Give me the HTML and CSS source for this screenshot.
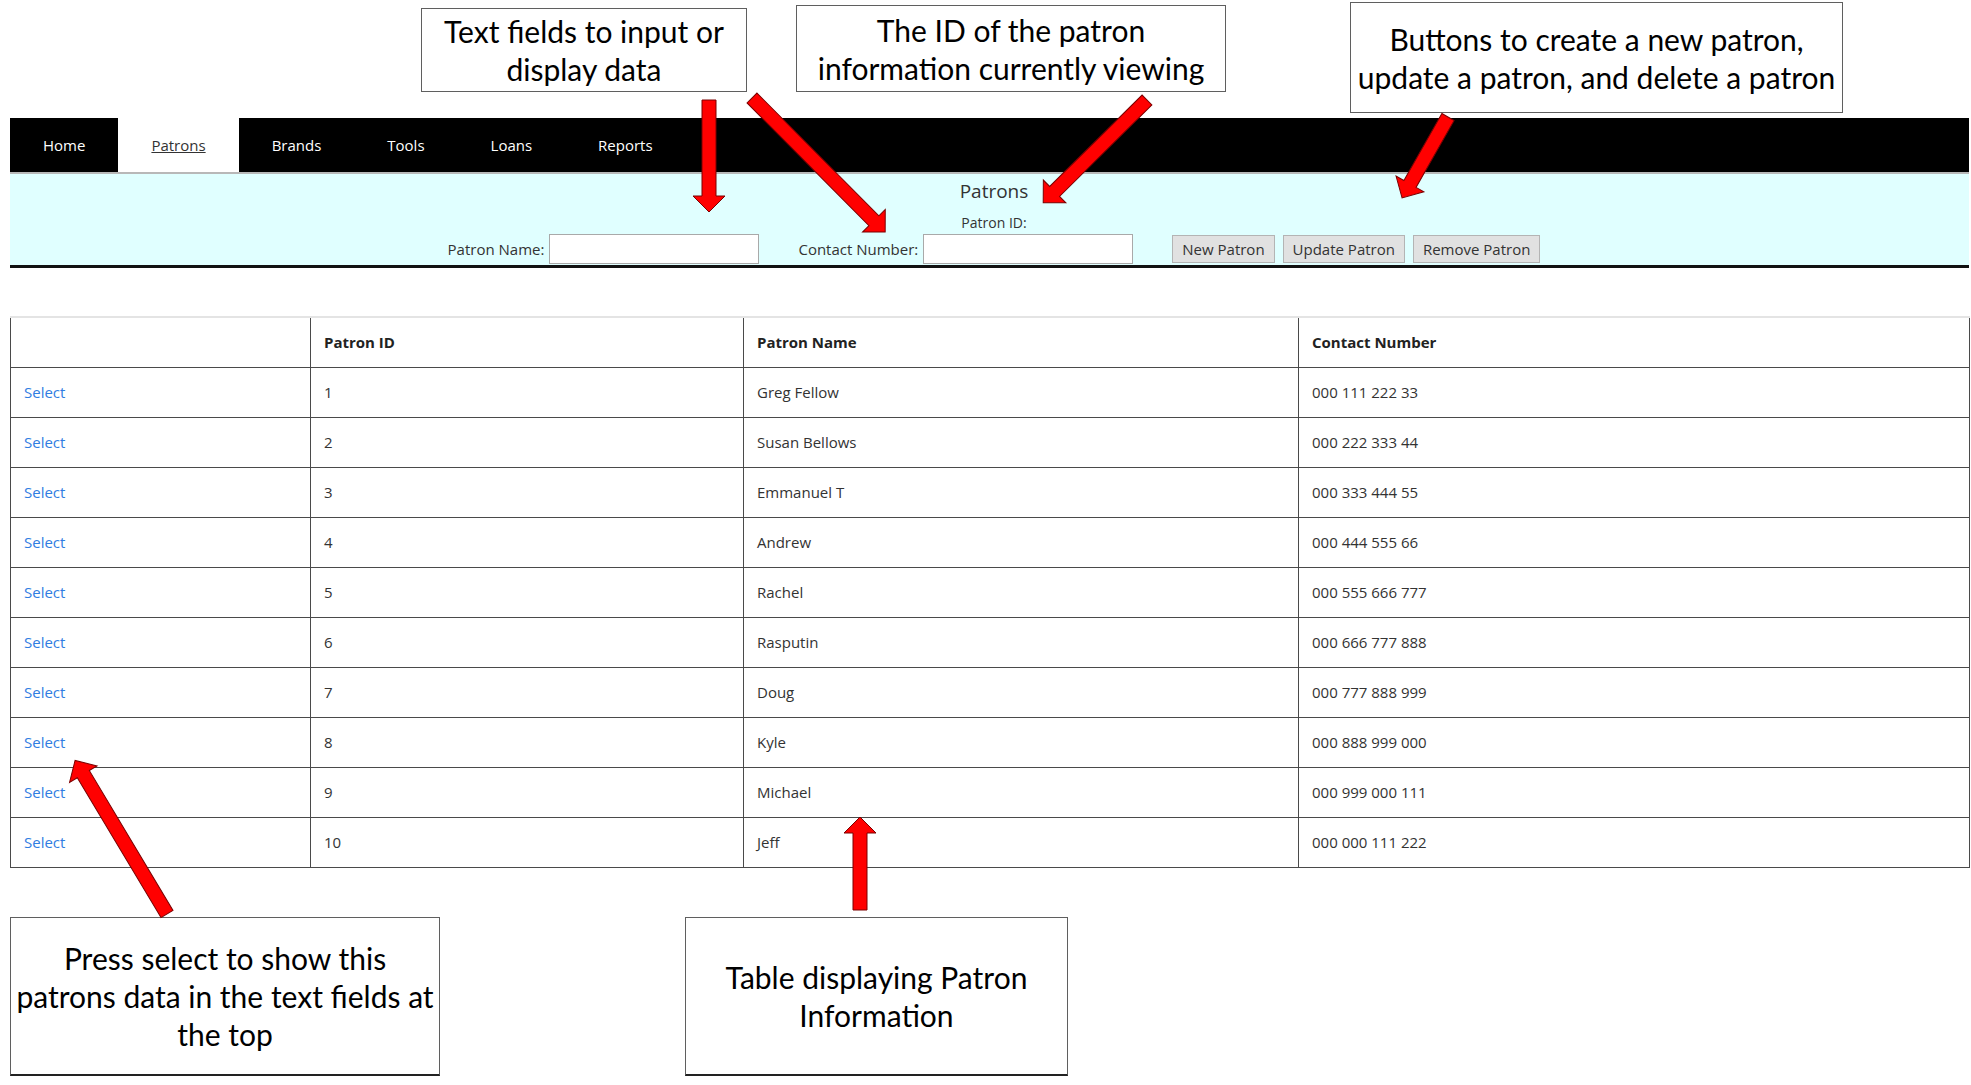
FILE: index.html
```html
<!DOCTYPE html>
<html lang="en">
<head>
<meta charset="utf-8">
<title>Patrons</title>
<link rel="stylesheet" href="styles.css">
</head>
<body>
<div class="page">
  <div class="notes-top">
    <div class="callout c1">Text fields to input or<br>display data</div>
    <div class="callout c2">The ID of the patron<br>information currently viewing</div>
    <div class="callout c3">Buttons to create a new patron,<br>update a patron, and delete a patron</div>
  </div>

  <nav class="nav">
    <a class="nav-item">Home</a>
    <a class="nav-item active">Patrons</a>
    <a class="nav-item">Brands</a>
    <a class="nav-item">Tools</a>
    <a class="nav-item">Loans</a>
    <a class="nav-item">Reports</a>
  </nav>

  <section class="panel">
    <div class="panel-title">Patrons</div>
    <div class="panel-id">Patron ID:</div>
    <div class="form-row">
      <label class="lbl">Patron Name:</label>
      <input class="field" type="text">
      <label class="lbl lbl-gap">Contact Number:</label>
      <input class="field" type="text">
      <div class="buttons">
        <button class="btn">New Patron</button>
        <button class="btn">Update Patron</button>
        <button class="btn">Remove Patron</button>
      </div>
    </div>
  </section>

  <table class="grid">
    <colgroup>
      <col class="col1"><col class="col2"><col class="col3"><col class="col4">
    </colgroup>
    <thead>
      <tr><th></th><th>Patron ID</th><th>Patron Name</th><th>Contact Number</th></tr>
    </thead>
    <tbody>
      <tr><td><a class="sel">Select</a></td><td>1</td><td>Greg Fellow</td><td>000 111 222 33</td></tr>
      <tr><td><a class="sel">Select</a></td><td>2</td><td>Susan Bellows</td><td>000 222 333 44</td></tr>
      <tr><td><a class="sel">Select</a></td><td>3</td><td>Emmanuel T</td><td>000 333 444 55</td></tr>
      <tr><td><a class="sel">Select</a></td><td>4</td><td>Andrew</td><td>000 444 555 66</td></tr>
      <tr><td><a class="sel">Select</a></td><td>5</td><td>Rachel</td><td>000 555 666 777</td></tr>
      <tr><td><a class="sel">Select</a></td><td>6</td><td>Rasputin</td><td>000 666 777 888</td></tr>
      <tr><td><a class="sel">Select</a></td><td>7</td><td>Doug</td><td>000 777 888 999</td></tr>
      <tr><td><a class="sel">Select</a></td><td>8</td><td>Kyle</td><td>000 888 999 000</td></tr>
      <tr><td><a class="sel">Select</a></td><td>9</td><td>Michael</td><td>000 999 000 111</td></tr>
      <tr><td><a class="sel">Select</a></td><td>10</td><td>Jeff</td><td>000 000 111 222</td></tr>
    </tbody>
  </table>

  <div class="notes-bottom">
    <div class="callout c4">Press select to show this<br>patrons data in the text fields at<br>the top</div>
    <div class="callout c5">Table displaying Patron<br>Information</div>
  </div>
</div>

<svg class="arrows" width="1971" height="1085" viewBox="0 0 1971 1085" aria-hidden="true">
  <defs>
    <polygon id="a112" points="0,-7 96,-7 96,-16 112,0 96,16 96,7 0,7"/>
    <polygon id="a189" points="0,-7 173,-7 173,-16 189,0 173,16 173,7 0,7"/>
    <polygon id="a146" points="0,-7 130,-7 130,-16 146,0 130,16 130,7 0,7"/>
    <polygon id="a93" points="0,-7 77,-7 77,-16 93,0 77,16 77,7 0,7"/>
    <polygon id="a179" points="0,-7 163,-7 163,-16 179,0 163,16 163,7 0,7"/>
  </defs>
  <g class="arrow">
    <use href="#a112" transform="translate(709 100) rotate(90)"/>
    <use href="#a189" transform="translate(752 98) rotate(45.2)"/>
    <use href="#a146" transform="translate(1147 100) rotate(135.3)"/>
    <use href="#a93" transform="translate(1448 117) rotate(119.6)"/>
    <use href="#a179" transform="translate(167 914) rotate(-120.9)"/>
    <use href="#a93" transform="translate(860 910) rotate(-90)"/>
  </g>
</svg>
</body>
</html>
```

FILE: styles.css
```css
* { box-sizing: border-box; }

html, body {
  margin: 0;
  padding: 0;
  background: #ffffff;
}

body {
  position: relative;
  width: 1971px;
  height: 1085px;
  overflow: hidden;
  font-family: "Open Sans", "Noto Sans", sans-serif;
  color: #333333;
}

.page {
  margin-left: 10px;
  width: 1959px;
}

/* ---------- annotation callouts ---------- */
.notes-top {
  display: flex;
  align-items: flex-start;
  height: 118px;
}

.callout {
  display: flex;
  align-items: center;
  justify-content: center;
  text-align: center;
  border: 1px solid #5f5f5f;
  background: #ffffff;
  font-family: "Lato", "Open Sans", sans-serif;
  font-size: 30px;
  line-height: 38px;
  color: #000000;
  white-space: nowrap;
}

.c1 { width: 326px; height: 84px; margin-left: 411px; margin-top: 8px; }
.c2 { width: 430px; height: 87px; margin-left: 49px; margin-top: 5px; }
.c3 { width: 493px; height: 111px; margin-left: 124px; margin-top: 2px; }

.notes-bottom {
  display: flex;
  align-items: flex-start;
  margin-top: 49px;
}

.c4 { width: 430px; height: 159px; border-bottom: 2px solid #222; }
.c5 { width: 383px; height: 159px; margin-left: 245px; border-bottom: 2px solid #222; }

/* ---------- navigation ---------- */
.nav {
  display: flex;
  height: 56px;
  background: #000000;
  border-bottom: 2px solid #b8b8b8;
}

.nav-item {
  display: flex;
  align-items: center;
  padding: 0 33px;
  font-size: 15px;
  color: #ffffff;
  text-decoration: none;
}

.nav-item.active {
  background: #ffffff;
  color: #333333;
  text-decoration: underline;
}

/* ---------- form panel ---------- */
.panel {
  background: #e0ffff;
  padding: 5px 0 1px;
  border-bottom: 3px solid #111111;
}

.panel-title {
  text-align: center;
  font-size: 19px;
  line-height: 24px;
  padding-left: 9px;
}

.panel-id {
  text-align: center;
  font-size: 14px;
  line-height: 20px;
  margin-top: 10px;
  padding-left: 9px;
}

.form-row {
  display: flex;
  align-items: center;
  justify-content: center;
  height: 30px;
  margin-top: 1px;
  padding-left: 9px;
}

.lbl {
  font-size: 15px;
  color: #333333;
  margin-right: 5px;
}

.lbl-gap { margin-left: 39px; }

.field {
  width: 210px;
  height: 30px;
  border: 1px solid #a9a9a9;
  background: #ffffff;
  padding: 0 4px;
  font-family: inherit;
}

.buttons {
  display: flex;
  gap: 8px;
  margin-left: 39px;
}

.btn {
  height: 28px;
  padding: 0 9px;
  border: 1px solid #b4b4b4;
  background: #e1e1e1;
  font-family: "Open Sans", "Noto Sans", sans-serif;
  font-size: 15px;
  color: #333333;
}

/* ---------- table ---------- */
.grid {
  width: 1959px;
  margin-top: 48px;
  border-collapse: collapse;
  table-layout: fixed;
  font-size: 15px;
}

.col1 { width: 300px; }
.col2 { width: 433px; }
.col3 { width: 555px; }
.col4 { width: 671px; }

.grid th,
.grid td {
  height: 50px;
  padding: 0 13px;
  border: 1px solid #4a4a4a;
  text-align: left;
  vertical-align: middle;
  color: #333333;
}

.grid thead th {
  border-top: 2px solid #e4e4e4;
  font-weight: 700;
  color: #222222;
}

.sel {
  color: #2f7de2;
  text-decoration: none;
}

/* ---------- arrows overlay ---------- */
.arrows {
  position: absolute;
  left: 0;
  top: 0;
  pointer-events: none;
}

.arrow use {
  fill: #ff0000;
  stroke: #7a0000;
  stroke-width: 1;
}
```
